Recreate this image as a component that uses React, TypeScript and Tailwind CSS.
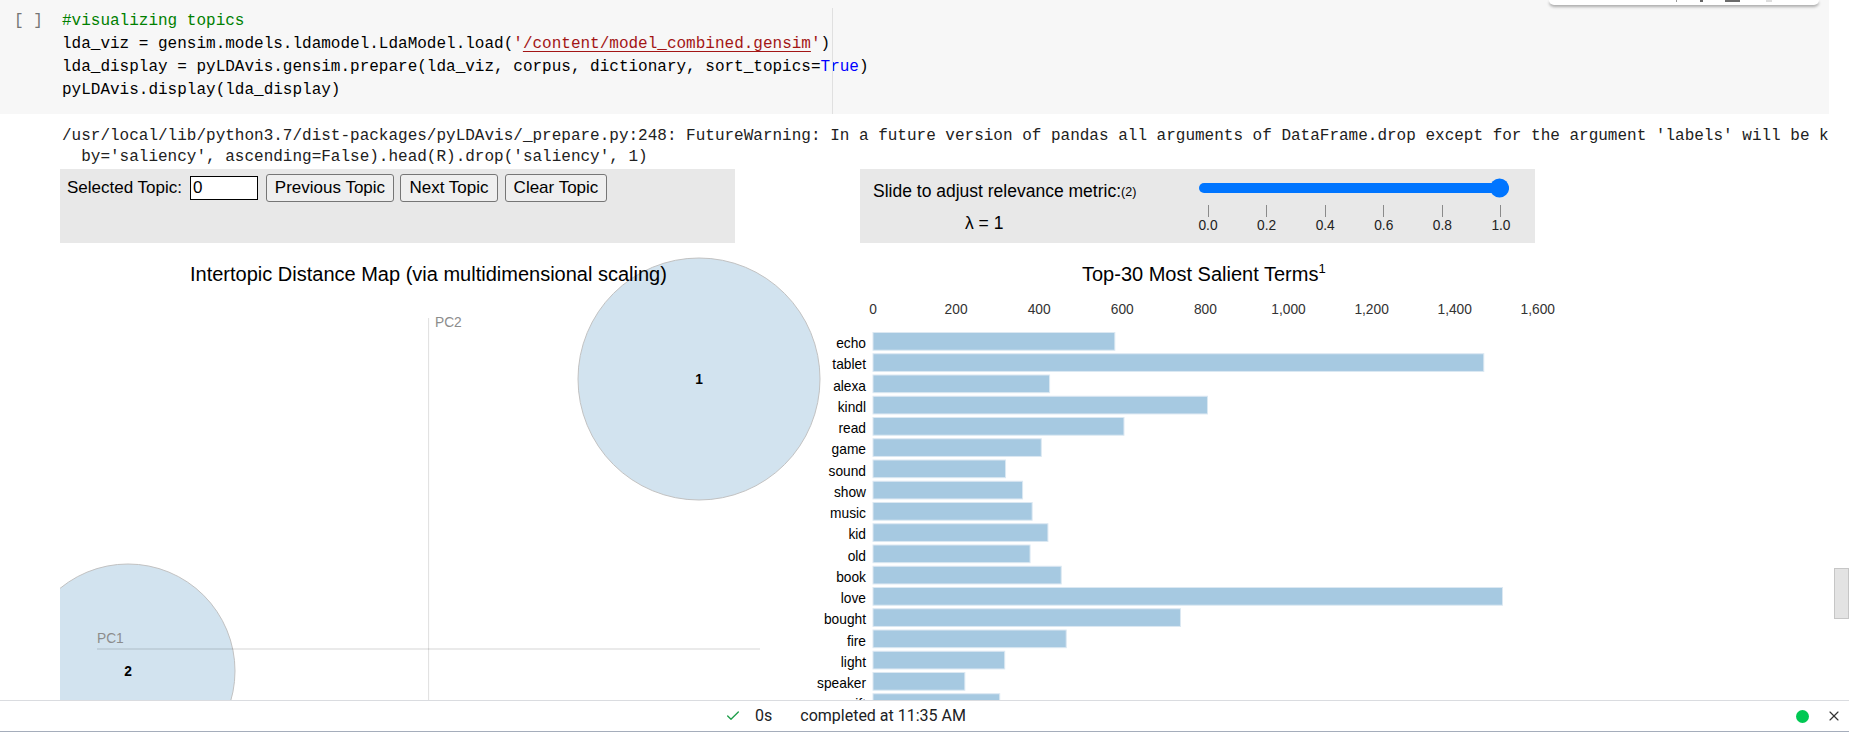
import { Check, X } from 'lucide-react';

interface Term {
    term: string;
    value: number;
}

// saliency values read off the bar chart (px per unit = 0.4155)
const terms: Term[] = [
    { term: 'echo', value: 582 },
    { term: 'tablet', value: 1470 },
    { term: 'alexa', value: 425 },
    { term: 'kindl', value: 805 },
    { term: 'read', value: 604 },
    { term: 'game', value: 405 },
    { term: 'sound', value: 319 },
    { term: 'show', value: 360 },
    { term: 'music', value: 383 },
    { term: 'kid', value: 421 },
    { term: 'old', value: 378 },
    { term: 'book', value: 453 },
    { term: 'love', value: 1515 },
    { term: 'bought', value: 740 },
    { term: 'fire', value: 465 },
    { term: 'light', value: 317 },
    { term: 'speaker', value: 221 },
    { term: 'gift', value: 305 }
];

const axisTicks = [0, 200, 400, 600, 800, 1000, 1200, 1400, 1600];
const sliderTicks = ['0.0', '0.2', '0.4', '0.6', '0.8', '1.0'];

const BAR_X = 813;
const SCALE = 0.4155;
const ROW = 21.25;

function CodeCell() {
    return (
        <div className="relative w-[1829px] h-[114px] bg-[#f7f7f7] pt-[10px] flex font-['Liberation_Mono',monospace] text-[16px] leading-[23px]">
            <div className="w-[62px] pl-[14px] text-[#757575] whitespace-pre">[ ]</div>
            <div className="whitespace-pre text-black">
                <div className="text-[#008000]">#visualizing topics</div>
                <div>
                    lda_viz = gensim.models.ldamodel.LdaModel.load(
                    <span className="text-[#a31515]">
                        '<span className="underline underline-offset-[3px] decoration-[#a31515]">/content/model_combined.gensim</span>'
                    </span>
                    )
                </div>
                <div>
                    lda_display = pyLDAvis.gensim.prepare(lda_viz, corpus, dictionary, sort_topics=
                    <span className="text-[#0000ff]">True</span>)
                </div>
                <div>pyLDAvis.display(lda_display)</div>
            </div>
            <div className="absolute left-[832px] top-[8px] bottom-0 w-px bg-[#e0e0e0]"></div>
        </div>
    );
}

function TopicControls() {
    return (
        <div className="w-[675px] h-[74px] bg-[#e8e8e8] pl-[7px] pt-[5px] font-['Liberation_Sans',Arial,sans-serif] text-[17px] text-black">
            <div className="flex items-center h-[28px]">
                <span>Selected Topic:</span>
                <div className="ml-[8px] w-[68px] h-[24px] border border-black bg-white leading-[22px] pl-[2px]">0</div>
                <button className="ml-[8px] w-[128px] h-[28px] bg-[#efefef] border border-[#767676] rounded-[3px]">Previous Topic</button>
                <button className="ml-[6px] w-[98px] h-[28px] bg-[#efefef] border border-[#767676] rounded-[3px]">Next Topic</button>
                <button className="ml-[7px] w-[102px] h-[28px] bg-[#efefef] border border-[#767676] rounded-[3px]">Clear Topic</button>
            </div>
        </div>
    );
}

function RelevanceSlider() {
    return (
        <div className="w-[675px] h-[74px] bg-[#e8e8e8] pl-[13px] flex font-['Liberation_Sans',Arial,sans-serif] text-black">
            <div className="w-[325px] pt-[12px] text-[17.5px] leading-[20px]">
                <div className="whitespace-nowrap">
                    Slide to adjust relevance metric:<sup className="text-[12.5px] relative -top-[1px]">(2)</sup>
                </div>
                <div className="mt-[12px] pl-[92px]">λ = 1</div>
            </div>
            <div className="w-[313px] pt-[14px]">
                <div className="relative ml-[1px] w-[310px] h-[10px] rounded-full bg-[#0075ff]">
                    <div className="absolute right-0 top-1/2 -translate-y-1/2 w-[19px] h-[19px] rounded-full bg-[#0075ff]"></div>
                </div>
                <div className="mt-[12px] flex justify-between">
                    {sliderTicks.map((t) => (
                        <div key={t} className="w-[20px] flex flex-col items-center">
                            <div className="w-px h-[12px] bg-[#8a8a8a]"></div>
                            <div className="mt-[1px] text-[13.75px] leading-[16px] text-[#222]">{t}</div>
                        </div>
                    ))}
                </div>
            </div>
        </div>
    );
}

function LdaChart() {
    return (
        <svg width={1769} height={470} className="block font-['Liberation_Sans',Arial,sans-serif]">
            {/* intertopic distance map */}
            <circle cx={639} cy={136} r={121} fill="#d2e3ef" stroke="#c2c2c2" strokeWidth={1} />
            <circle cx={68} cy={428} r={107} fill="#d2e3ef" stroke="#c2c2c2" strokeWidth={1} />

            <line x1={368.6} y1={75} x2={368.6} y2={470} stroke="rgba(0,0,0,0.13)" strokeWidth={1} />
            <line x1={37} y1={406} x2={700} y2={406} stroke="rgba(0,0,0,0.17)" strokeWidth={1} />
            <text x={375} y={84} fontSize={13.75} fill="#8c8c8c">PC2</text>
            <text x={37} y={400} fontSize={13.75} fill="#8c8c8c">PC1</text>

            <text x={639} y={141} fontSize={13.75} fontWeight="bold" textAnchor="middle" fill="#000">1</text>
            <text x={68} y={433} fontSize={13.75} fontWeight="bold" textAnchor="middle" fill="#000">2</text>

            <text x={130} y={38} fontSize={20} fill="#000">Intertopic Distance Map (via multidimensional scaling)</text>

            {/* salient terms bar chart */}
            <text x={1022} y={38} fontSize={20} fill="#000">
                Top-30 Most Salient Terms<tspan fontSize={13} dy={-8}>1</tspan>
            </text>

            {axisTicks.map((t) => (
                <text key={t} x={BAR_X + t * SCALE} y={71} fontSize={13.75} textAnchor="middle" fill="#333">
                    {t.toLocaleString('en-US')}
                </text>
            ))}

            {terms.map((d, i) => {
                const top = 89.5 + i * ROW;
                return (
                    <g key={d.term}>
                        <rect x={BAR_X} y={top} width={d.value * SCALE} height={17.7} fill="#a6c9e1" stroke="#dbe8f2" strokeWidth={1} />
                        <text x={806} y={top + 15.5} fontSize={13.75} textAnchor="end" fill="#000">{d.term}</text>
                    </g>
                );
            })}
        </svg>
    );
}

function StatusBar() {
    return (
        <div className="h-[32px] shrink-0 border-t border-[#dadce0] border-b border-b-[#a5adbb] bg-white flex items-center font-['Roboto',sans-serif] text-[16px] text-[#202124]">
            <Check className="ml-[725px] w-[16px] h-[16px] text-[#1e9e4a]" strokeWidth={2} />
            <span className="ml-[14px]">0s</span>
            <span className="ml-[28px]">completed at 11:35 AM</span>
            <div className="ml-auto w-[13px] h-[13px] rounded-full bg-[#00c853]"></div>
            <X className="ml-[17px] mr-[7px] w-[16px] h-[16px] text-[#333]" strokeWidth={1.75} />
        </div>
    );
}

export default function App() {
    return (
        <div className="relative w-[1849px] h-[732px] bg-white flex flex-col overflow-hidden">
            <div className="flex-1 overflow-hidden">
                <CodeCell />

                <div className="w-[1829px] overflow-hidden pt-[12px]">
                    <pre className="pl-[62px] font-['Liberation_Mono',monospace] text-[16px] leading-[21px] text-[#212121]">
{`/usr/local/lib/python3.7/dist-packages/pyLDAvis/_prepare.py:248: FutureWarning: In a future version of pandas all arguments of DataFrame.drop except for the argument 'labels' will be keyword-only
  by='saliency', ascending=False).head(R).drop('saliency', 1)`}
                    </pre>

                    <div className="mt-[1px] pl-[60px] flex gap-[125px]">
                        <TopicControls />
                        <RelevanceSlider />
                    </div>

                    <div className="pl-[60px]">
                        <LdaChart />
                    </div>
                </div>
            </div>

            <StatusBar />

            {/* floating cell toolbar, cut off at the top */}
            <div className="absolute top-0 left-[1549px] w-[270px] h-[5px] bg-white rounded-b-[5px] shadow-[0_2px_3px_rgba(0,0,0,0.3)]">
                <div className="absolute left-[127px] top-0 w-px h-[2px] bg-[#999]"></div>
                <div className="absolute left-[151px] top-0 w-[3px] h-[2px] bg-[#666]"></div>
                <div className="absolute left-[176px] top-0 w-[15px] h-[2px] bg-[#6b6b6b]"></div>
                <div className="absolute left-[217px] top-0 w-[6px] h-[2px] bg-[#ddd]"></div>
            </div>

            {/* page scrollbar thumb */}
            <div className="absolute left-[1834px] top-[568px] w-[15px] h-[51px] bg-[#e3e3e3] border border-[#c6c6c6]"></div>
        </div>
    );
}
